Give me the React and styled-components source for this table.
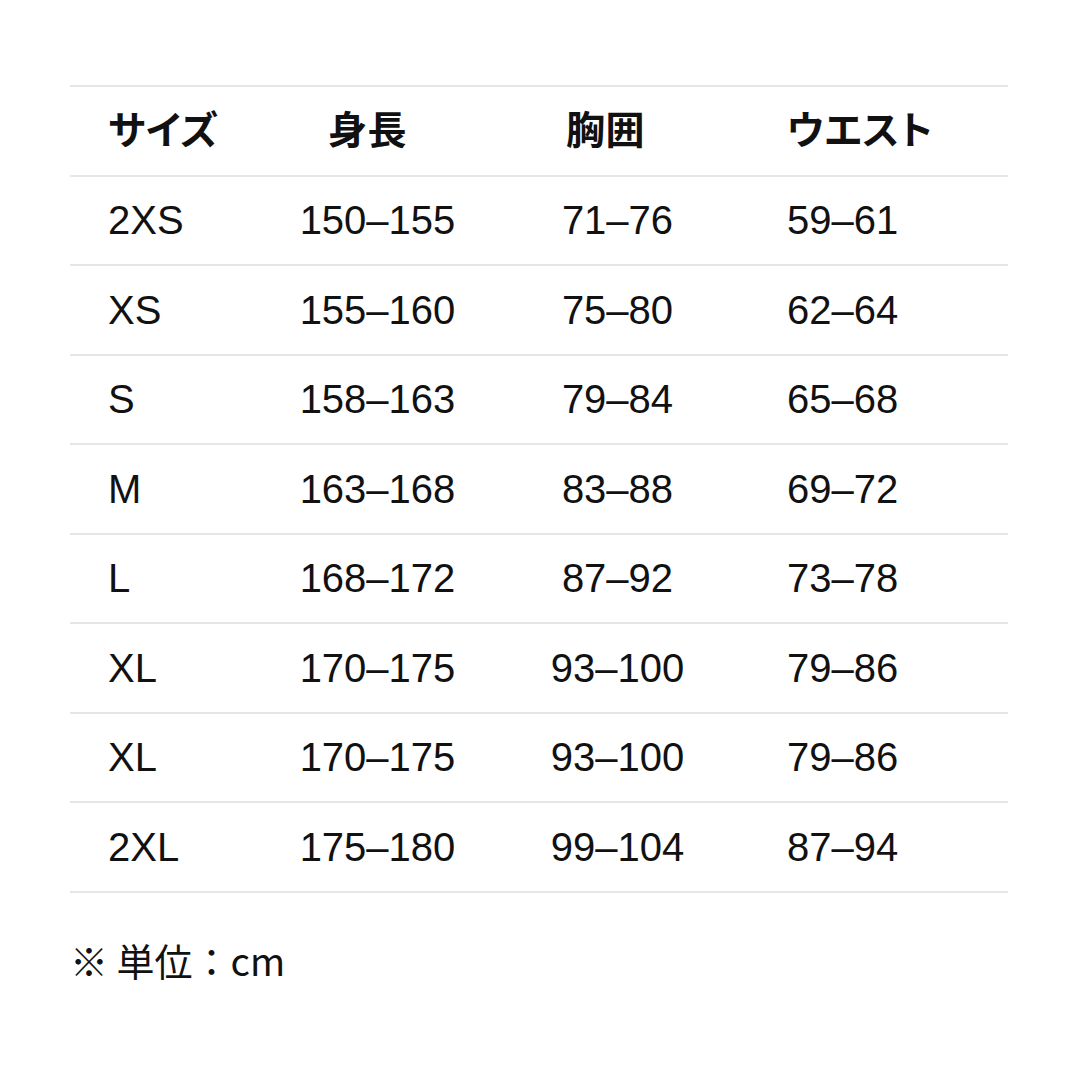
import React from 'react';
import styled, { createGlobalStyle } from 'styled-components';

const GlobalStyle = createGlobalStyle`
  html, body {
    margin: 0;
    padding: 0;
    background: #ffffff;
  }
  body {
    font-family: "Liberation Sans", "Noto Sans CJK JP", sans-serif;
    color: #111111;
  }
`;

const Page = styled.div`
  width: 1080px;
  height: 1080px;
  padding: 85px 72px 0 70px;
  box-sizing: border-box;
`;

const Table = styled.div`
  width: 938px;
  border-top: 2px solid #e6e6e6;
`;

const Row = styled.div`
  display: grid;
  grid-template-columns: 190px 235px 245px 1fr;
  align-items: center;
  height: 87.5px;
  border-bottom: 2px solid #e6e6e6;
`;

const Cell = styled.div`
  font-size: 40px;
  line-height: 1;
  text-align: ${(p) => p.$align || 'left'};
  padding-left: ${(p) => p.$pl || 0}px;
  padding-right: ${(p) => p.$pr || 0}px;
  white-space: nowrap;
`;

const HeadCell = styled(Cell)`
  font-family: "Noto Sans CJK JP", sans-serif;
  font-weight: 700;
  font-size: 39px;
  font-feature-settings: "palt";
  letter-spacing: 0.5px;
  margin-top: -6px;
`;

const Note = styled.div`
  margin-top: 42px;
  font-family: "Noto Sans CJK JP", sans-serif;
  font-size: 38px;
  line-height: 50px;
  color: #111111;
`;

const rows = [
  ['2XS', '150–155', '71–76', '59–61'],
  ['XS', '155–160', '75–80', '62–64'],
  ['S', '158–163', '79–84', '65–68'],
  ['M', '163–168', '83–88', '69–72'],
  ['L', '168–172', '87–92', '73–78'],
  ['XL', '170–175', '93–100', '79–86'],
  ['XL', '170–175', '93–100', '79–86'],
  ['2XL', '175–180', '99–104', '87–94'],
];

export default function App() {
  return (
    <Page>
      <GlobalStyle />
      <Table>
        <Row>
          <HeadCell $pl={38}>サイズ</HeadCell>
          <HeadCell $align="center" $pr={20}>身長</HeadCell>
          <HeadCell $align="center" $pr={24}>胸囲</HeadCell>
          <HeadCell $pl={47}>ウエスト</HeadCell>
        </Row>
        {rows.map((r, i) => (
          <Row key={i}>
            <Cell $pl={38}>{r[0]}</Cell>
            <Cell $align="center">{r[1]}</Cell>
            <Cell $align="center">{r[2]}</Cell>
            <Cell $pl={47}>{r[3]}</Cell>
          </Row>
        ))}
      </Table>
      <Note>※ 単位：cm</Note>
    </Page>
  );
}
